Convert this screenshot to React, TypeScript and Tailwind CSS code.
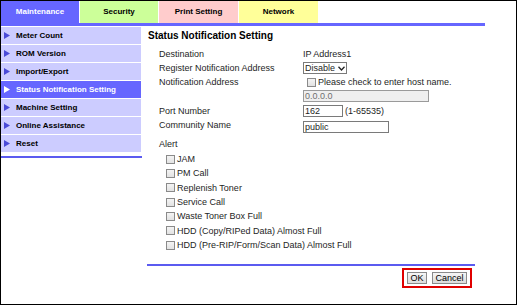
import React from "react";

const tabs = [
  { name: "Maintenance", bg: "bg-[#6666ff] text-white", w: "w-[78px]" },
  { name: "Security", bg: "bg-[#ccff99] text-black", w: "w-[78px]" },
  { name: "Print Setting", bg: "bg-[#ffcccc] text-black", w: "w-[79px]" },
  { name: "Network", bg: "bg-[#ffff99] text-black", w: "w-[79px]" },
];

const menu = [
  "Meter Count",
  "ROM Version",
  "Import/Export",
  "Status Notification Setting",
  "Machine Setting",
  "Online Assistance",
  "Reset",
];

const alerts = [
  "JAM",
  "PM Call",
  "Replenish Toner",
  "Service Call",
  "Waste Toner Box Full",
  "HDD (Copy/RIPed Data) Almost Full",
  "HDD (Pre-RIP/Form/Scan Data) Almost Full",
];

function Arrow({ white }: { white?: boolean }) {
  return (
    <svg width="6" height="7" viewBox="0 0 6 7" className="shrink-0">
      <path d="M0 0 L6 3.5 L0 7 Z" fill={white ? "#ffffff" : "#4a4ad8"} />
    </svg>
  );
}

function Box() {
  return (
    <span className="inline-block w-[9px] h-[9px] border border-[#8a8a8a] bg-gradient-to-b from-[#f4f4f4] to-[#e2e2e2] shrink-0" />
  );
}

function Row({ h, label, children }: { h: string; label?: string; children?: React.ReactNode }) {
  return (
    <div className={`flex items-center ${h}`}>
      <div className="w-[155px] pl-[11px] shrink-0">{label}</div>
      <div className="flex items-center">{children}</div>
    </div>
  );
}

export default function App() {
  return (
    <div className="w-[517px] h-[305px] border border-black bg-white overflow-hidden font-['Liberation_Sans',Arial,sans-serif] text-[#1e1e1e]">
      <div className="flex gap-px h-[22px]">
        {tabs.map((t) => (
          <div
            key={t.name}
            className={`${t.w} ${t.bg} flex items-center justify-center text-[8px] font-bold`}
          >
            {t.name}
          </div>
        ))}
      </div>
      <div className="w-[484px] h-[3px] bg-[#6666ff]" />
      <div className="flex mt-px">
        <div className="w-[140px] shrink-0">
          {menu.map((m) => {
            const sel = m === "Status Notification Setting";
            return (
              <div
                key={m}
                className={`h-[17px] mb-px flex items-center gap-[6px] pl-[3px] text-[8px] font-bold ${
                  sel ? "bg-[#6666ff] text-white" : "bg-[#ccccff] text-black"
                }`}
              >
                <Arrow white={sel} />
                {m}
              </div>
            );
          })}
          <div className="mt-[4px] h-[2px] w-[141px] bg-[#5b5bf0]" />
        </div>

        <div className="pl-[7px] text-[9px] leading-[12px] flex-1">
          <div className="mt-[3px] h-[12px] text-[10px] font-bold text-black">
            Status Notification Setting
          </div>
          <div className="mt-[6px]" />
          <Row h="h-[12px]" label="Destination">IP Address1</Row>
          <Row h="h-[16px]" label="Register Notification Address">
            <div className="w-[44px] h-[12px] border border-[#7a7a7a] bg-white flex items-center gap-[3px] pl-[1px]">
              <span>Disable</span>
              <svg width="7" height="5" viewBox="0 0 7 5">
                <path d="M0.5 0.8 L3.5 4 L6.5 0.8" stroke="#222" strokeWidth="1.3" fill="none" />
              </svg>
            </div>
          </Row>
          <Row h="h-[12px]" label="Notification Address">
            <span className="ml-[4px] mr-[2px] flex">
              <Box />
            </span>
            Please check to enter host name.
          </Row>
          <Row h="h-[16px]">
            <div className="w-[126px] h-[12px] border border-[#9a9a9a] bg-[#efefef] text-[#707070] pl-[1px] flex items-center">
              0.0.0.0
            </div>
          </Row>
          <Row h="h-[14px]" label="Port Number">
            <div className="w-[40px] h-[12px] border border-[#7a7a7a] bg-white pl-[1px] flex items-center">
              162
            </div>
            <span className="ml-[2px]">(1-65535)</span>
          </Row>
          <Row h="h-[14px]" label="Community Name">
            <div className="w-[86px] h-[12px] mt-[3px] border border-[#7a7a7a] bg-white pl-[1px] flex items-center">
              public
            </div>
          </Row>
          <div className="mt-[6px] h-[12px] pl-[11px] flex items-center">Alert</div>
          <div className="mt-[2px]">
            {alerts.map((a) => (
              <div key={a} className="h-[14.33px] flex items-center pl-[18px] gap-[2px]">
                <Box />
                {a}
              </div>
            ))}
          </div>
          <div className="mt-[12px] -ml-px w-[328px] h-[2px] bg-[#5b5bf0]" />
          <div className="-ml-px w-[325px] flex justify-end mt-[2px]">
            <div className="border-2 border-[#e00000] h-[20px] flex items-center gap-[5px] px-[3px]">
              <button className="w-[20px] h-[12px] border border-[#8a8a8a] bg-gradient-to-b from-[#f6f6f6] to-[#dcdcdc] text-[9px] leading-[10px] text-black">
                OK
              </button>
              <button className="w-[35px] h-[12px] border border-[#8a8a8a] bg-gradient-to-b from-[#f6f6f6] to-[#dcdcdc] text-[9px] leading-[10px] text-black">
                Cancel
              </button>
            </div>
          </div>
        </div>
      </div>
    </div>
  );
}
